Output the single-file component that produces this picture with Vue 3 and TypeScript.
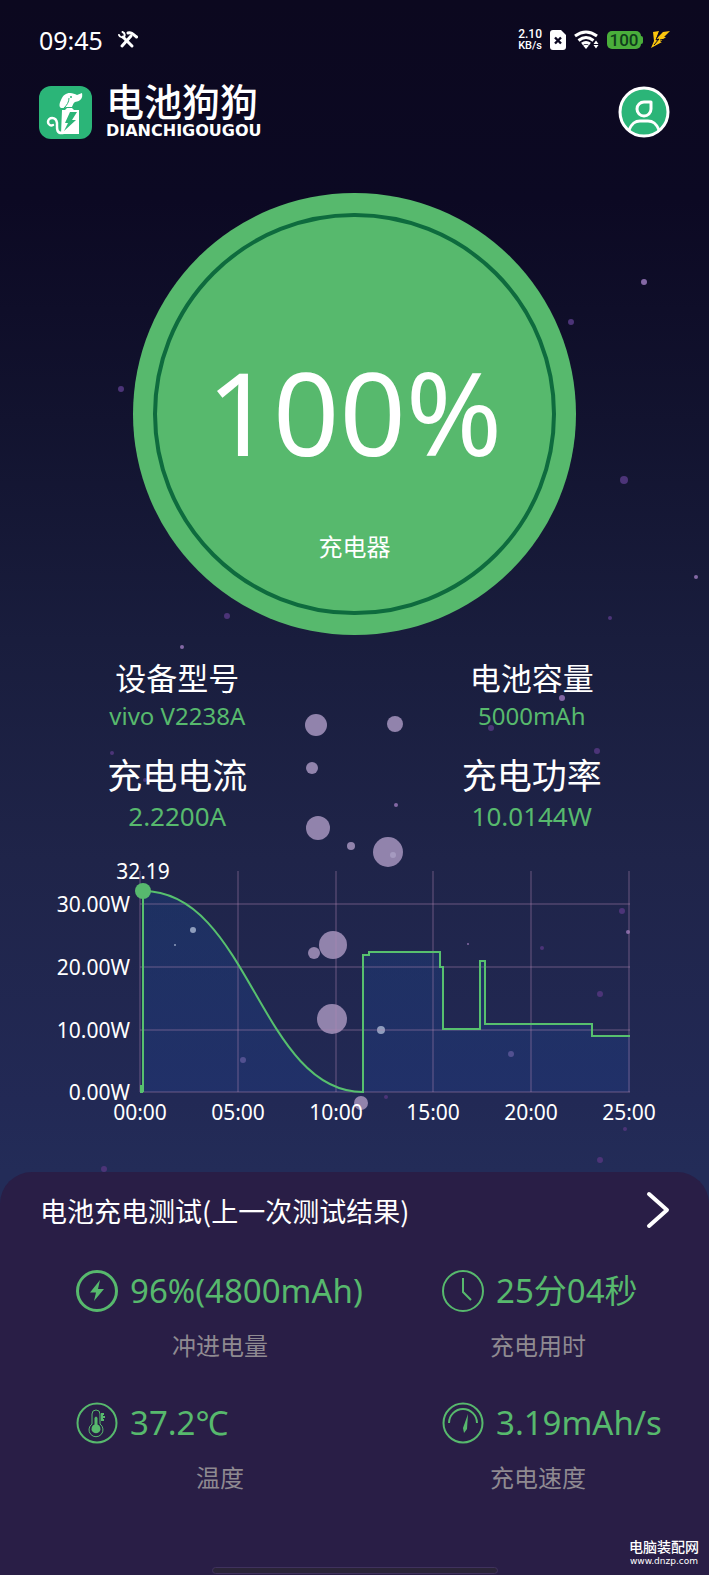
<script setup lang="ts">
interface Metric {
  label: string
  value: string
  large?: boolean
}

interface Stat {
  icon: 'bolt' | 'clock' | 'thermo' | 'gauge'
  value: string
  label: string
}

interface Bubble {
  x: number
  y: number
  r: number
  tone: 'big' | 'lilac' | 'violet' | 'pale' | 'glow'
}

const metrics: Metric[] = [
  { label: '设备型号', value: 'vivo V2238A' },
  { label: '电池容量', value: '5000mAh' },
  { label: '充电电流', value: '2.2200A', large: true },
  { label: '充电功率', value: '10.0144W', large: true },
]

const stats: Stat[] = [
  { icon: 'bolt', value: '96%(4800mAh)', label: '冲进电量' },
  { icon: 'clock', value: '25分04秒', label: '充电用时' },
  { icon: 'thermo', value: '37.2℃', label: '温度' },
  { icon: 'gauge', value: '3.19mAh/s', label: '充电速度' },
]

const xTicks = ['00:00', '05:00', '10:00', '15:00', '20:00', '25:00'].map((text, i) => ({
  text,
  x: Math.round(140 + i * 97.8),
}))

const yTicks = [
  { text: '30.00W', y: 904 },
  { text: '20.00W', y: 967 },
  { text: '10.00W', y: 1030 },
  { text: '0.00W', y: 1092 },
]

const line =
  'M143 1092V891C249 891 260 1092 363 1092V955H369V952H440V967H443V1029H480V961H485V1024H592V1036H630'

const bubbles: Bubble[] = [
  { x: 644, y: 282, r: 3, tone: 'lilac' },
  { x: 571, y: 322, r: 3, tone: 'violet' },
  { x: 121, y: 389, r: 3, tone: 'violet' },
  { x: 624, y: 480, r: 4, tone: 'violet' },
  { x: 696, y: 577, r: 2, tone: 'lilac' },
  { x: 610, y: 618, r: 2, tone: 'violet' },
  { x: 227, y: 616, r: 3, tone: 'violet' },
  { x: 182, y: 647, r: 2, tone: 'lilac' },
  { x: 562, y: 698, r: 3, tone: 'lilac' },
  { x: 491, y: 728, r: 3, tone: 'violet' },
  { x: 597, y: 751, r: 3, tone: 'violet' },
  { x: 112, y: 753, r: 2, tone: 'violet' },
  { x: 145, y: 780, r: 2, tone: 'violet' },
  { x: 316, y: 725, r: 11, tone: 'big' },
  { x: 395, y: 724, r: 8, tone: 'big' },
  { x: 312, y: 768, r: 6, tone: 'big' },
  { x: 318, y: 828, r: 12, tone: 'big' },
  { x: 351, y: 846, r: 4, tone: 'big' },
  { x: 388, y: 852, r: 15, tone: 'big' },
  { x: 393, y: 855, r: 3, tone: 'pale' },
  { x: 396, y: 805, r: 2, tone: 'lilac' },
  { x: 333, y: 945, r: 14, tone: 'big' },
  { x: 314, y: 953, r: 6, tone: 'big' },
  { x: 332, y: 1019, r: 15, tone: 'big' },
  { x: 193, y: 930, r: 3, tone: 'glow' },
  { x: 175, y: 945, r: 1, tone: 'glow' },
  { x: 243, y: 1060, r: 3, tone: 'lilac' },
  { x: 381, y: 1030, r: 4, tone: 'glow' },
  { x: 361, y: 1103, r: 7, tone: 'big' },
  { x: 386, y: 1097, r: 2, tone: 'violet' },
  { x: 468, y: 944, r: 1, tone: 'lilac' },
  { x: 542, y: 948, r: 2, tone: 'violet' },
  { x: 622, y: 911, r: 3, tone: 'violet' },
  { x: 628, y: 932, r: 2, tone: 'lilac' },
  { x: 600, y: 994, r: 3, tone: 'violet' },
  { x: 511, y: 1054, r: 3, tone: 'lilac' },
  { x: 625, y: 1129, r: 2, tone: 'violet' },
  { x: 600, y: 1160, r: 3, tone: 'violet' },
  { x: 104, y: 1169, r: 3, tone: 'violet' },
]
</script>

<template>
  <main class="screen">
    <svg class="bubbles" viewBox="0 0 709 1575" aria-hidden="true">
      <circle v-for="(b, i) in bubbles" :key="i" :cx="b.x" :cy="b.y" :r="b.r" :class="b.tone" />
    </svg>

    <div class="status">
      <span class="time">09:45</span>
      <svg width="20" height="18" viewBox="0 0 20 18" aria-hidden="true">
        <g fill="none" stroke="#fff" stroke-linecap="round">
          <path d="M5 6L14 15" stroke-width="3" />
          <path d="M13 5L4 15" stroke-width="3" />
          <path d="M1 4C2 7 6 7 6.500 5C7 3 6 1.500 4.500 1" stroke-width="2" />
          <path d="M10 2C13 1 15 3 18.500 6" stroke-width="3" />
        </g>
      </svg>
      <div class="status-right">
        <span class="speed"><b>2.10</b><small>KB/s</small></span>
        <svg width="16" height="20" viewBox="0 0 16 20" aria-hidden="true">
          <path d="M3 0H11L16 5V17Q16 20 13 20H3Q0 20 0 17V3Q0 0 3 0Z" fill="#fff" />
          <path d="M5 7.500L11 13.500M11 7.500L5 13.500" stroke="#0c0822" stroke-width="2.400" />
        </svg>
        <svg width="25" height="19" viewBox="0 0 25 19" aria-hidden="true">
          <g fill="none" stroke="#fff" stroke-width="3">
            <path d="M1 6Q12 -2 23 6" />
            <path d="M4.500 10.500Q12 4.500 19.500 10.500" />
            <path d="M8 14Q12 11 16 14" />
          </g>
          <path d="M9 15.500Q12 14 15 15.500L12 19Z" fill="#fff" />
          <path d="M22 10.500L24.500 14H19.500ZM22 18.500L24.500 15H19.500Z" fill="#fff" />
        </svg>
        <span class="battery">100</span>
        <svg width="19" height="17" viewBox="0 0 19 17" aria-hidden="true">
          <path d="M2 1L8 0L5 8L12 1L19 0L13 6H15L9 11H11L0 17L3 10Z" fill="#fbc50d" />
          <path d="M9 0L5 9L8 8L3 14M14 8L9 9" stroke="#0c0822" fill="none" />
        </svg>
      </div>
    </div>

    <header class="brand-bar">
      <svg width="53" height="53" viewBox="0 0 53 53" role="img" aria-label="电池狗狗">
        <rect width="53" height="53" rx="12" fill="#2bb578" />
        <path
          d="M22 22C20 21 20 18 22 14C24 9 27 7 31 7C34 7 36 8 38 9L43 7C44 12 42 15 36 16C34 17 34 19 33 21H27C25 22 24 22 22 22Z"
          fill="#fff"
        />
        <path d="M30 12C30 16 28 19 25 22" fill="none" stroke="#2bb578" />
        <circle cx="32" cy="11" r="1" fill="#2bb578" />
        <path d="M23 24H26L28 22H33L35 24H40V48H22Z" fill="#fff" />
        <path
          d="M24 47C17 48 18 42 18 37C17 30 9 31 9 36C9 39 12 40 14 39"
          fill="none"
          stroke="#fff"
          stroke-width="2.500"
          stroke-linecap="round"
        />
        <path d="M31 26H38L33 34H37L25 45L29 37H26Z" fill="#2bb578" />
      </svg>
      <div class="wordmark">
        <strong>电池狗狗</strong>
        <span>DIANCHIGOUGOU</span>
      </div>
      <button class="avatar" type="button" aria-label="个人中心">
        <svg width="52" height="52" viewBox="0 0 52 52" aria-hidden="true">
          <circle cx="26" cy="26" r="24" fill="#2bb578" stroke="#fff" stroke-width="3" />
          <g fill="none" stroke="#fff" stroke-width="3" stroke-linecap="round">
            <path d="M33 16V23A7 7 0 1 1 26 16Z" stroke-linejoin="round" />
            <path d="M11 44C14 37 17 35 22 35H30C35 35 38 37 41 44" />
          </g>
        </svg>
      </button>
    </header>

    <section class="gauge">
      <div class="ring">
        <span class="percent">100%</span>
        <span class="source">充电器</span>
      </div>
    </section>

    <dl class="metrics">
      <div v-for="m in metrics" :key="m.label" class="metric" :class="{ large: m.large }">
        <dt>{{ m.label }}</dt>
        <dd>{{ m.value }}</dd>
      </div>
    </dl>

    <svg class="chart" viewBox="0 852 709 280" role="img" aria-label="充电功率曲线">
      <defs>
        <linearGradient id="area" x1="0" y1="0" x2="0" y2="1">
          <stop offset="0" stop-color="#1c3c78" stop-opacity=".5" />
          <stop offset="1" stop-color="#20387c" stop-opacity=".5" />
        </linearGradient>
      </defs>
      <path :d="`${line}V1092Z`" fill="url(#area)" />
      <g class="grid">
        <path v-for="t in xTicks" :key="t.text" :d="`M${t.x} 871V1092`" />
        <path v-for="t in yTicks" :key="t.text" :d="`M140 ${t.y}H630`" />
      </g>
      <path d="M141 1085V1092H143" class="line" />
      <path :d="line" class="line" />
      <circle cx="143" cy="891" r="8" fill="#57b96e" />
      <text x="143" y="879" text-anchor="middle">32.19</text>
      <text v-for="t in yTicks" :key="t.text" x="130" :y="t.y + 8" text-anchor="end">{{ t.text }}</text>
      <text v-for="t in xTicks" :key="t.text" :x="t.x" y="1120" text-anchor="middle">{{ t.text }}</text>
    </svg>

    <section class="sheet">
      <header class="sheet-head">
        <h2>电池充电测试(上一次测试结果)</h2>
        <button type="button" aria-label="查看测试结果">
          <svg width="24" height="38" viewBox="0 0 24 38" aria-hidden="true">
            <path d="M3 3L21 19L3 35" fill="none" stroke="#fff" stroke-width="4" stroke-linecap="round" stroke-linejoin="round" />
          </svg>
        </button>
      </header>

      <div class="stats">
        <div v-for="s in stats" :key="s.label" class="stat">
          <div class="reading">
            <svg width="42" height="42" viewBox="0 0 42 42" aria-hidden="true">
              <template v-if="s.icon === 'bolt'">
                <circle cx="21" cy="21" r="19.500" class="stroke" stroke-width="3" />
                <path d="M24 10L14 22.500H20L18 31L28 19H22Z" class="fill" />
              </template>
              <template v-else-if="s.icon === 'clock'">
                <circle cx="21" cy="21" r="20" class="stroke" stroke-width="2" />
                <path d="M21 8V22L29 30" class="stroke" stroke-width="2" />
              </template>
              <template v-else-if="s.icon === 'thermo'">
                <circle cx="21" cy="21" r="19.500" class="stroke" stroke-width="2" />
                <path d="M16 22V12A4 4 0 0 1 24 12V22A7 7 0 1 1 16 22Z" class="stroke" stroke-width="1" />
                <path d="M18.500 16Q20 13 21.500 16V22.500A4.500 4.500 0 1 1 18.500 22.500Z" class="fill" />
                <path d="M25 12H28M25 15H29M25 18H28M26 11V19" class="stroke" stroke-width="2" />
              </template>
              <template v-else>
                <circle cx="21" cy="21" r="19.500" class="stroke" stroke-width="2" />
                <path d="M7 21A14 14 0 0 1 35 21" class="stroke" stroke-width="2" />
                <path d="M26 12L21 26L22 31L25 27Z" class="fill" />
              </template>
            </svg>
            <span>{{ s.value }}</span>
          </div>
          <p>{{ s.label }}</p>
        </div>
      </div>

      <div class="home-bar"></div>
      <div class="credit">
        <strong>电脑装配网</strong>
        <span>www.dnzp.com</span>
      </div>
    </section>
  </main>
</template>

<style>
body {
  margin: 0;
  background: #0c0822;
}
</style>

<style scoped>
.screen {
  position: relative;
  display: flex;
  flex-direction: column;
  min-height: 100vh;
  color: #fff;
  font-family: "Noto Sans", "Noto Sans CJK SC", sans-serif;
  background: linear-gradient(#0c081f 0, #0c0923 200px, #12132f 420px, #191d3d 640px, #1f2449 860px, #222955 1100px, #232c58 1172px);
  overflow: hidden;
}
.screen > * {
  position: relative;
}
.screen > .bubbles {
  position: absolute;
  top: 0;
  left: 0;
  width: 100%;
}
.big {
  fill: #9183ac;
}
.lilac {
  fill: #8468a5;
}
.violet {
  fill: #4c3478;
}
.pale {
  fill: #a59ac0;
}
.glow {
  fill: #fff;
}
button {
  display: block;
  padding: 0;
  border: 0;
  background: none;
  cursor: pointer;
}
svg {
  display: block;
}

.status {
  display: flex;
  align-items: center;
  gap: 15px;
  height: 79px;
  padding: 0 39px;
}
.time {
  font-size: 25px;
  line-height: 32px;
}
.status-right {
  display: flex;
  align-items: center;
  gap: 8px;
  margin-left: auto;
}
.speed {
  display: flex;
  flex-direction: column;
  font-family: Roboto, sans-serif;
  font-size: 12px;
  line-height: 11px;
  text-align: center;
}
.speed b {
  font-weight: 500;
}
.speed small {
  font-size: 11px;
  font-weight: 500;
}
.battery {
  position: relative;
  width: 34px;
  margin-right: 2px;
  border-radius: 5px;
  background: #4aae3b;
  color: #0f3d1c;
  font-family: Roboto, sans-serif;
  font-size: 17px;
  font-weight: 500;
  line-height: 18px;
  text-align: center;
}
.battery::after {
  content: "";
  position: absolute;
  top: 5px;
  right: -2px;
  width: 2px;
  height: 8px;
  border-radius: 0 2px 2px 0;
  background: #4aae3b;
}

.brand-bar {
  display: flex;
  align-items: center;
  gap: 14px;
  height: 66px;
  padding: 0 39px;
}
.wordmark {
  display: flex;
  flex-direction: column;
  gap: 4px;
}
.wordmark strong {
  font-family: "Noto Sans CJK SC", sans-serif;
  font-size: 38px;
  font-weight: 500;
  line-height: 34px;
}
.wordmark span {
  font-family: "DejaVu Sans", sans-serif;
  font-size: 16px;
  font-weight: 700;
  line-height: 20px;
}
.avatar {
  margin-left: auto;
}

.gauge {
  box-sizing: border-box;
  display: flex;
  width: 62.400%;
  aspect-ratio: 1;
  margin: 48px auto 0;
  padding: 20px;
  border-radius: 50%;
  background: #57b96d;
}
.ring {
  display: flex;
  flex: 1;
  flex-direction: column;
  align-items: center;
  padding-top: 134px;
  border: 4px solid #0e6b3e;
  border-radius: 50%;
}
.percent {
  font-size: 116px;
  line-height: 120px;
}
.source {
  margin-top: 60px;
  font-size: 24px;
  line-height: 32px;
}

.metrics {
  display: grid;
  grid-template-columns: 1fr 1fr;
  row-gap: 24px;
  margin: 23px 0 0;
}
.metric {
  display: flex;
  flex-direction: column;
  align-items: center;
  gap: 2px;
}
.metric.large {
  gap: 4px;
}
dt {
  font-size: 31px;
  line-height: 40px;
}
dd {
  margin: 0;
  color: #57b96d;
  font-size: 24px;
  line-height: 32px;
}
.large dt {
  font-size: 35px;
}
.large dd {
  font-size: 26px;
}

.chart {
  width: 100%;
  margin-top: 20px;
}
.chart text {
  fill: #fff;
  font-size: 21px;
}
.grid path {
  fill: none;
  stroke: #b487b4;
  stroke-opacity: 0.500;
  stroke-width: 1px;
}
.line {
  fill: none;
  stroke: #57c06e;
  stroke-width: 2px;
}

.sheet {
  flex: 1;
  margin-top: 40px;
  border-radius: 32px 32px 0 0;
  background: #291e46;
}
.sheet-head {
  display: flex;
  align-items: center;
  justify-content: space-between;
  height: 76px;
  padding: 0 39px 0 40px;
}
h2 {
  margin: 0;
  font-family: "Noto Sans CJK SC", sans-serif;
  font-size: 27px;
  font-weight: 400;
}
.stats {
  display: grid;
  grid-template-columns: 366fr 267fr;
  row-gap: 37px;
  margin-top: 19px;
  padding-left: 76px;
}
.stat {
  width: 288px;
}
.stat:nth-child(even) {
  width: 192px;
}
.reading {
  display: flex;
  align-items: center;
  gap: 12px;
  height: 48px;
  color: #57b96d;
  font-size: 33px;
  line-height: 48px;
  white-space: nowrap;
}
.reading svg {
  flex: none;
}
.stroke {
  fill: none;
  stroke: #57b96d;
}
.fill {
  fill: #57b96d;
}
.stat p {
  margin: 15px 0 0;
  color: #8f8a91;
  font-size: 24px;
  line-height: 32px;
  text-align: center;
}
.home-bar {
  position: absolute;
  bottom: 1px;
  left: 50%;
  box-sizing: border-box;
  width: 286px;
  height: 7px;
  margin-left: -143px;
  border: 1px solid #40325d;
  border-radius: 4px;
  background: #2a2438;
}
.credit {
  position: absolute;
  right: 10px;
  bottom: 8px;
  display: flex;
  flex-direction: column;
  align-items: center;
}
.credit strong {
  font-size: 14px;
  font-weight: 500;
  line-height: 17px;
}
.credit span {
  font-family: "DejaVu Sans", sans-serif;
  font-size: 9px;
  line-height: 12px;
}
</style>
